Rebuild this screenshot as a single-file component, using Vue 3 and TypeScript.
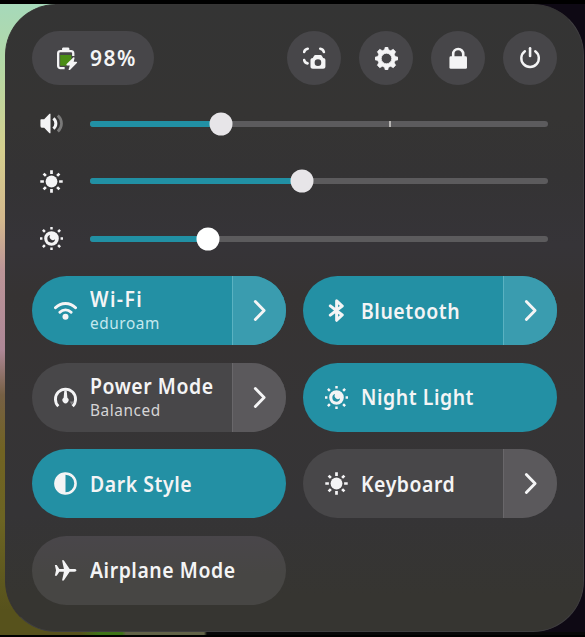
<script setup lang="ts">
import { computed, defineComponent, h, ref } from 'vue'

type IconName =
  | 'battery' | 'screenshot' | 'settings' | 'lock' | 'power' | 'volume' | 'sun'
  | 'night' | 'wifi' | 'bluetooth' | 'gauge' | 'contrast' | 'airplane' | 'chevron'

const shapes: Record<IconName, string> = {
  battery:
    '<path d="M3.600 5.600h7.800v3.200L8 13H3.600z" fill="#4b8d16"/><path d="M6.700 14.700H3.700a1.500 1.500 0 0 1-1.500-1.500V4.300a1.500 1.500 0 0 1 1.500-1.500h7.500a1.500 1.500 0 0 1 1.500 1.500v2" fill="none" stroke="currentColor" stroke-width="1.600"/><path d="M4.900 2.800V1.300c0-.6.400-1 1-1H9c.6 0 1 .4 1 1v1.500z"/><path d="M12.700 7.300 8.100 11.800c-.4.500-.2 1.100.5 1.100h1.700l-.8 2.600c-.1.600.5.900.9.500l4.800-4.800c.4-.5.200-1-.4-1H13l.6-2.500c.1-.6-.5-.800-.9-.4z"/>',
  screenshot:
    '<path d="M.800 3.500A3 3 0 0 1 3.300 1.200M12 1.200a3 3 0 0 1 2.500 2.300M.800 9a3 3 0 0 0 2.400 2.400" fill="none" stroke="currentColor" stroke-width="1.800" stroke-linecap="round"/><path fill-rule="evenodd" d="M6.800 7.600l.9-1.500c.2-.4.500-.6.900-.6h3.600c.4 0 .7.200.9.600l.9 1.500c1 0 1.600.6 1.600 1.500v4.400c0 .9-.7 1.600-1.600 1.600H6.800c-.9 0-1.600-.7-1.600-1.600V9.100c0-.9.700-1.500 1.600-1.500zm3.600 1a2.300 2.300 0 1 0 0 4.600 2.300 2.300 0 0 0 0-4.600z"/>',
  settings:
    '<path fill-rule="evenodd" d="M7.200 0h1.600l.6 1.950 1.500.620 1.800-.960 1.650 1.650-.960 1.800.620 1.500 1.990.6v1.680l-1.990.6-.620 1.500.960 1.800-1.650 1.650-1.800-.960-1.500.620-.6 1.950H7.200l-.6-1.950-1.500-.620-1.800.960-1.650-1.650.960-1.800-.620-1.500L0 8.840V7.160l1.990-.6.620-1.500-.960-1.800L3.300 1.610l1.800.960 1.500-.620zM8 4.350a3.650 3.650 0 1 0 0 7.300 3.650 3.650 0 0 0 0-7.300z" stroke="currentColor" stroke-width=".5" stroke-linejoin="round"/>',
  lock:
    '<path d="M4.300 7V4.900a3.500 3.500 0 0 1 7 0V7" fill="none" stroke="currentColor" stroke-width="1.800"/><rect x="1.700" y="6.500" width="12.200" height="8.700" rx="1"/>',
  power:
    '<path d="M4.100 2.900a6.100 6.100 0 1 0 7.200 0" fill="none" stroke="currentColor" stroke-width="1.700" stroke-linecap="round"/><path d="M7.700.9v5.300" fill="none" stroke="currentColor" stroke-width="1.800" stroke-linecap="round"/>',
  volume:
    '<path d="M.3 5.500c0-.3.200-.5.500-.5h2.100L6.600 1.200H7.300v13.600h-.7L2.900 11H1.600A1.300 1.300 0 0 1 .3 9.700z"/><path d="M9.300 4.400c2.300 1.800 2.300 5.400 0 7.200" fill="none" stroke="currentColor" stroke-width="2.100"/><path d="M12.400 2.400c3.400 3.200 3.400 8 0 11.200" fill="none" stroke="currentColor" stroke-width="1.900" opacity=".36"/>',
  sun:
    '<circle cx="8" cy="8" r="4.100"/><path d="M8 .2v2.500M8 13.300v2.500M.2 8h2.500M13.300 8h2.500M2.500 2.500l1.600 1.600M11.900 11.900l1.600 1.600M2.500 13.500l1.600-1.600M11.900 4.100l1.600-1.600" fill="none" stroke="currentColor" stroke-width="1.900"/>',
  night:
    '<path fill-rule="evenodd" d="M8 2.900a5.100 5.100 0 1 0 0 10.200A5.100 5.100 0 0 0 8 2.900zM7.100 5.600a2.250 2.250 0 0 0 3.400 2.900A2.700 2.700 0 1 1 7.100 5.600z"/><path d="M8 0v1.700M8 14.300V16M0 8h1.700M14.300 8H16M2 2l1.400 1.400M12.600 12.600 14 14M2 14l1.400-1.400M12.600 3.400 14 2" fill="none" stroke="currentColor" stroke-width="1.700"/>',
  wifi:
    '<circle cx="8" cy="12.400" r="2.100"/><path d="M1 6.100a9.700 9.700 0 0 1 14 0M4.100 9.200a5.500 5.500 0 0 1 7.800 0" fill="none" stroke="currentColor" stroke-width="2" stroke-linecap="round"/>',
  bluetooth:
    '<path d="m3.700 4.800 8.300 6.300-3.900 3.700V1.200L12 4.900l-8.300 6.300" fill="none" stroke="currentColor" stroke-width="2.100" stroke-linejoin="round" stroke-linecap="round"/>',
  gauge:
    '<path d="M3 14.100A7 7 0 1 1 13 14.100" fill="none" stroke="currentColor" stroke-width="2"/><path d="M7.200 3h1.600l.5 5.200a2.100 2.100 0 1 1-2.600 0z"/><path d="M11 10.700h2.600l-1.300 2.600z" opacity=".35"/>',
  contrast:
    '<circle cx="8" cy="8" r="7" fill="none" stroke="currentColor" stroke-width="1.800"/><path d="M8 .6a7.400 7.400 0 0 0 0 14.800z"/>',
  airplane:
    '<path d="M.6 4.100h1.300l1.800 2.900h3.200L5.600.9h1.200l4.100 6.100h3.300c.9 0 1.400.4 1.400.9s-.5.9-1.400.9h-3.300l-4.100 6.100H5.600l1.300-6.100H3.700l-1.800 2.900H.6l.8-3.800z"/>',
  chevron:
    '<path d="m5.100 1.700 6.100 6.300-6.100 6.300" fill="none" stroke="currentColor" stroke-width="2" stroke-linecap="round" stroke-linejoin="round"/>',
}

const Icon = defineComponent({
  props: { name: { type: String, required: true } },
  setup(props) {
    return () =>
      h('svg', {
        viewBox: '0 0 16 16',
        width: 23,
        height: 23,
        fill: 'currentColor',
        'aria-hidden': 'true',
        innerHTML: shapes[props.name as IconName],
      })
  },
})

interface Slider { id: string; icon: IconName; value: number; mark?: number; bright?: boolean }
interface Toggle { id: string; icon: IconName; title: string; subtitle?: string; active: boolean; menu: boolean }

const battery = ref(98)
const batteryLabel = computed(() => `${battery.value}%`)
const actions: IconName[] = ['screenshot', 'settings', 'lock', 'power']

const sliders = ref<Slider[]>([
  { id: 'volume', icon: 'volume', value: 28.7, mark: 65.4 },
  { id: 'brightness', icon: 'sun', value: 46.2 },
  { id: 'temperature', icon: 'night', value: 25.8, bright: true },
])

const toggles = ref<Toggle[]>([
  { id: 'wifi', icon: 'wifi', title: 'Wi-Fi', subtitle: 'eduroam', active: true, menu: true },
  { id: 'bluetooth', icon: 'bluetooth', title: 'Bluetooth', active: true, menu: true },
  { id: 'power', icon: 'gauge', title: 'Power Mode', subtitle: 'Balanced', active: false, menu: true },
  { id: 'night', icon: 'night', title: 'Night Light', active: true, menu: false },
  { id: 'dark', icon: 'contrast', title: 'Dark Style', active: true, menu: false },
  { id: 'keyboard', icon: 'sun', title: 'Keyboard', active: false, menu: true },
  { id: 'airplane', icon: 'airplane', title: 'Airplane Mode', active: false, menu: false },
])
</script>

<template>
  <div class="desktop">
    <main class="panel">
      <header class="top">
        <button class="battery"><Icon name="battery" /><span>{{ batteryLabel }}</span></button>
        <nav class="actions">
          <button v-for="a in actions" :key="a" class="round"><Icon :name="a" /></button>
        </nav>
      </header>

      <section class="sliders">
        <div v-for="s in sliders" :key="s.id" class="slider">
          <Icon :name="s.icon" />
          <div class="track">
            <div class="fill" :style="{ width: s.value + '%' }"></div>
            <i v-if="s.mark" class="mark" :style="{ left: s.mark + '%' }"></i>
            <i class="handle" :class="{ bright: s.bright }" :style="{ left: s.value + '%' }"></i>
          </div>
        </div>
      </section>

      <section class="grid">
        <div v-for="t in toggles" :key="t.id" class="tile" :class="[t.id, { active: t.active }]">
          <button class="main" @click="t.active = !t.active">
            <Icon :name="t.icon" />
            <span class="labels">
              <span class="title">{{ t.title }}</span>
              <span v-if="t.subtitle" class="subtitle">{{ t.subtitle }}</span>
            </span>
          </button>
          <button v-if="t.menu" class="more"><Icon name="chevron" /></button>
        </div>
      </section>
    </main>
  </div>
</template>

<style>
body {
  margin: 0;
  background: #000;
}
</style>

<style scoped>
.desktop {
  box-sizing: border-box;
  width: 585px;
  height: 637px;
  padding: 4px 1px 5px 5px;
  overflow: hidden;
  background:
    linear-gradient(#000, #000) 0 0 / 100% 4px no-repeat,
    linear-gradient(#000, #000) 0 100% / 100% 2px no-repeat,
    linear-gradient(90deg, #57521c 0 80px, #3f7518 100px 122px, #626347 126px 204px, #080808 207px) 0 632px / 100% 3px no-repeat,
    linear-gradient(#a6d9ba 4px, #b3d9a8 60px, #d5cf8e 150px, #d3b88d 220px, #bc9598 270px, #ad8796 350px, #766044 395px, #716323 450px, #6c6423 520px, #57521c 610px) 0 0 / 80px 100% no-repeat,
    #0e0914;
  font-family: 'Noto Sans', sans-serif;
  color: #f4f4f5;
}
.panel {
  box-sizing: border-box;
  height: 628px;
  padding: 27px 26px 0 26px;
  border: 1px solid #403f41;
  border-left-color: #373434;
  border-top-color: #363535;
  border-radius: 51px;
  background: linear-gradient(#343434 0, #353433 110px, #343334 170px, #363438 240px, #363333 290px, #363435 400px, #353436 510px, #363531 590px);
}
button {
  display: flex;
  align-items: center;
  padding: 0;
  border: 0;
  background: none;
  color: inherit;
  font: inherit;
}
svg {
  flex: none;
  display: block;
}
.top {
  display: flex;
  justify-content: space-between;
  height: 54px;
  margin-top: -1px;
}
.battery {
  width: 122px;
  padding-left: 23px;
  gap: 12px;
  border-radius: 27px;
  background: #474649;
  font-size: 21px;
  font-weight: 600;
  letter-spacing: 1.500px;
}
.actions {
  display: flex;
  gap: 18px;
}
.round {
  justify-content: center;
  width: 54px;
  height: 54px;
  border-radius: 50%;
  background: #474649;
}
.sliders {
  display: grid;
  grid-template-rows: repeat(3, 57.600px);
  padding: 10px 9px 0 8px;
}
.slider {
  display: flex;
  align-items: center;
  gap: 27px;
}
.track {
  position: relative;
  flex: 1;
  height: 6px;
  border-radius: 3px;
  background: #5c5b5d;
}
.fill {
  height: 100%;
  border-radius: 3px 0 0 3px;
  background: #2190a4;
}
.handle,
.mark {
  position: absolute;
  top: 50%;
  transform: translate(-50%, -50%);
}
.handle {
  width: 23px;
  height: 23px;
  border-radius: 50%;
  background: #e7e5e8;
}
.handle.bright {
  background: #fff;
}
.mark {
  width: 2px;
  height: 6px;
  background: #b5b3b1;
}
.grid {
  display: grid;
  grid-template-columns: repeat(2, 254px);
  grid-auto-rows: 69px;
  gap: 17.400px;
  margin-top: 8.600px;
}
.tile {
  display: flex;
  overflow: hidden;
  border-radius: 34.500px;
  background: #484749;
}
.tile.airplane {
  background: linear-gradient(#49464a, #474644 55%);
}
.tile.active {
  background: #2390a4;
}
.main {
  flex: 1;
  gap: 13px;
  padding-left: 22px;
  text-align: left;
}
.labels {
  display: flex;
  flex-direction: column;
}
.title {
  font-size: 21px;
  font-weight: 600;
  letter-spacing: 0.600px;
  line-height: 26px;
  white-space: nowrap;
  transform: scaleX(0.925);
  transform-origin: left;
}
.subtitle {
  font-size: 16px;
  letter-spacing: 0.600px;
  line-height: 23px;
  color: #d6d5d6;
  transform: scaleX(0.96);
  transform-origin: left;
}
.wifi .title {
  letter-spacing: 1.500px;
}
.active .subtitle {
  color: #c5e8ee;
}
.more {
  box-sizing: border-box;
  justify-content: center;
  width: 54px;
  border-left: 1px solid #69676a;
  background: #5b595c;
}
.active .more {
  border-color: #5ab2c1;
  background: #3a9caf;
}
</style>
